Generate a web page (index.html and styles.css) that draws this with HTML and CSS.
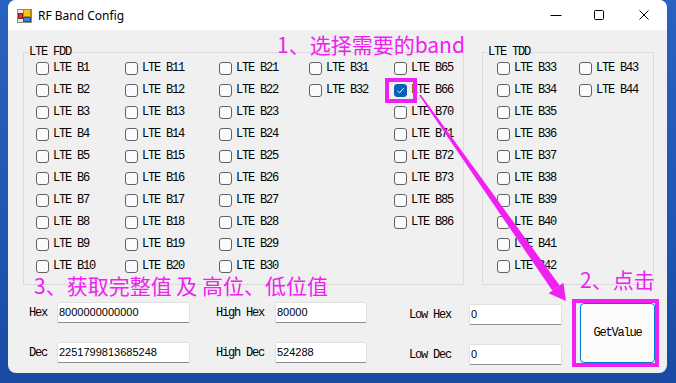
FILE: index.html
```html
<!DOCTYPE html>
<html>
<head>
<meta charset="utf-8">
<link rel="stylesheet" href="styles.css">
</head>
<body>
<div class="desktop">
  <div class="window">
    <div class="titlebar">
      <svg class="appicon" width="15" height="14" viewBox="0 0 15 14">
        <rect x="0.5" y="0.5" width="14" height="13" fill="#e8e8e8" stroke="#8a8a8a"/>
        <rect x="1.5" y="4.5" width="4" height="5" fill="#e03030" stroke="#902020"/>
        <rect x="6.5" y="0.5" width="7" height="7" fill="#f5c518" stroke="#b08a10"/>
        <rect x="6.5" y="8.5" width="7" height="4" fill="#3c7fe0" stroke="#2050a0"/>
      </svg>
      <span class="title">RF Band Config</span>
      <div class="controls">
        <span class="ctl c-min"><svg width="12" height="12" viewBox="0 0 12 12"><line x1="0.5" y1="6.5" x2="11.5" y2="6.5" stroke="#000" stroke-width="1"/></svg></span>
        <span class="ctl c-max"><svg width="12" height="12" viewBox="0 0 12 12"><rect x="1.5" y="1.5" width="9" height="9" rx="1" fill="none" stroke="#000" stroke-width="1"/></svg></span>
        <span class="ctl c-close"><svg width="12" height="12" viewBox="0 0 12 12"><path d="M1.5 1.5 L10.5 10.5 M10.5 1.5 L1.5 10.5" stroke="#000" stroke-width="1"/></svg></span>
      </div>
    </div>
    <div class="client">
      <div class="groups">
        <div class="group fdd">
          <span class="legend">LTE FDD</span>
          <div class="col w1">
            <div class="item"><span class="box"></span><span class="lab">LTE B1</span></div>
            <div class="item"><span class="box"></span><span class="lab">LTE B2</span></div>
            <div class="item"><span class="box"></span><span class="lab">LTE B3</span></div>
            <div class="item"><span class="box"></span><span class="lab">LTE B4</span></div>
            <div class="item"><span class="box"></span><span class="lab">LTE B5</span></div>
            <div class="item"><span class="box"></span><span class="lab">LTE B6</span></div>
            <div class="item"><span class="box"></span><span class="lab">LTE B7</span></div>
            <div class="item"><span class="box"></span><span class="lab">LTE B8</span></div>
            <div class="item"><span class="box"></span><span class="lab">LTE B9</span></div>
            <div class="item"><span class="box"></span><span class="lab">LTE B10</span></div>
          </div>
          <div class="col w2">
            <div class="item"><span class="box"></span><span class="lab">LTE B11</span></div>
            <div class="item"><span class="box"></span><span class="lab">LTE B12</span></div>
            <div class="item"><span class="box"></span><span class="lab">LTE B13</span></div>
            <div class="item"><span class="box"></span><span class="lab">LTE B14</span></div>
            <div class="item"><span class="box"></span><span class="lab">LTE B15</span></div>
            <div class="item"><span class="box"></span><span class="lab">LTE B16</span></div>
            <div class="item"><span class="box"></span><span class="lab">LTE B17</span></div>
            <div class="item"><span class="box"></span><span class="lab">LTE B18</span></div>
            <div class="item"><span class="box"></span><span class="lab">LTE B19</span></div>
            <div class="item"><span class="box"></span><span class="lab">LTE B20</span></div>
          </div>
          <div class="col w3">
            <div class="item"><span class="box"></span><span class="lab">LTE B21</span></div>
            <div class="item"><span class="box"></span><span class="lab">LTE B22</span></div>
            <div class="item"><span class="box"></span><span class="lab">LTE B23</span></div>
            <div class="item"><span class="box"></span><span class="lab">LTE B24</span></div>
            <div class="item"><span class="box"></span><span class="lab">LTE B25</span></div>
            <div class="item"><span class="box"></span><span class="lab">LTE B26</span></div>
            <div class="item"><span class="box"></span><span class="lab">LTE B27</span></div>
            <div class="item"><span class="box"></span><span class="lab">LTE B28</span></div>
            <div class="item"><span class="box"></span><span class="lab">LTE B29</span></div>
            <div class="item"><span class="box"></span><span class="lab">LTE B30</span></div>
          </div>
          <div class="col w4">
            <div class="item"><span class="box"></span><span class="lab">LTE B31</span></div>
            <div class="item"><span class="box"></span><span class="lab">LTE B32</span></div>
          </div>
          <div class="col">
            <div class="item"><span class="box"></span><span class="lab">LTE B65</span></div>
            <div class="item"><span class="box checked"><svg width="9" height="9" viewBox="0 0 9 9"><path d="M1.5 4.8 L3.6 6.8 L7.6 2.2" fill="none" stroke="#fff" stroke-width="1"/></svg></span><span class="lab">LTE B66</span></div>
            <div class="item"><span class="box"></span><span class="lab">LTE B70</span></div>
            <div class="item"><span class="box"></span><span class="lab">LTE B71</span></div>
            <div class="item"><span class="box"></span><span class="lab">LTE B72</span></div>
            <div class="item"><span class="box"></span><span class="lab">LTE B73</span></div>
            <div class="item"><span class="box"></span><span class="lab">LTE B85</span></div>
            <div class="item"><span class="box"></span><span class="lab">LTE B86</span></div>
          </div>
        </div>
        <div class="group tdd">
          <span class="legend">LTE TDD</span>
          <div class="col w5">
            <div class="item"><span class="box"></span><span class="lab">LTE B33</span></div>
            <div class="item"><span class="box"></span><span class="lab">LTE B34</span></div>
            <div class="item"><span class="box"></span><span class="lab">LTE B35</span></div>
            <div class="item"><span class="box"></span><span class="lab">LTE B36</span></div>
            <div class="item"><span class="box"></span><span class="lab">LTE B37</span></div>
            <div class="item"><span class="box"></span><span class="lab">LTE B38</span></div>
            <div class="item"><span class="box"></span><span class="lab">LTE B39</span></div>
            <div class="item"><span class="box"></span><span class="lab">LTE B40</span></div>
            <div class="item"><span class="box"></span><span class="lab">LTE B41</span></div>
            <div class="item"><span class="box"></span><span class="lab">LTE B42</span></div>
          </div>
          <div class="col">
            <div class="item"><span class="box"></span><span class="lab">LTE B43</span></div>
            <div class="item"><span class="box"></span><span class="lab">LTE B44</span></div>
          </div>
        </div>
      </div>
      <div class="bottom">
        <div class="fields">
          <span class="lab">Hex</span>
          <input class="field" type="text" value="8000000000000" readonly>
          <span class="lab mid">High Hex</span>
          <input class="field" type="text" value="80000" readonly>
          <span class="lab far">Low Hex</span>
          <input class="field low" type="text" value="0" readonly>
          <span class="lab">Dec</span>
          <input class="field" type="text" value="2251799813685248" readonly>
          <span class="lab mid">High Dec</span>
          <input class="field" type="text" value="524288" readonly>
          <span class="lab far">Low Dec</span>
          <input class="field low" type="text" value="0" readonly>
        </div>
        <button class="getvalue">GetValue</button>
      </div>
    </div>
  </div>

  <div class="ann ann1">1、选择需要的band</div>
  <div class="ann ann2">2、点击</div>
  <div class="ann ann3">3、获取完整值 及 高位、低位值</div>
  <svg class="overlay" width="676" height="383" viewBox="0 0 676 383">
    <rect x="387" y="80" width="28" height="21" fill="none" stroke="#f020f0" stroke-width="4"/>
    <rect x="574" y="301" width="83" height="64" fill="none" stroke="#f020f0" stroke-width="4"/>
    <polygon points="419,95 421,95 559.7,285.4 552.3,290.6" fill="#f020f0"/>
    <polygon points="563.4,282.8 548.6,293.2 566,301" fill="#f020f0"/>
  </svg>
</div>
</body>
</html>
```
FILE: styles.css
```css
* { box-sizing: border-box; }
html, body { margin: 0; padding: 0; }
body { width: 676px; height: 383px; overflow: hidden; }

.desktop {
  position: relative;
  width: 676px;
  height: 383px;
  background: linear-gradient(180deg, #2a62c2 0%, #1f55b4 60%, #1a4aa2 100%);
  padding-left: 8px;
}

.window {
  width: 659px;
  height: 373px;
  background: #f0f0f0;
  border-radius: 8px;
  overflow: hidden;
  display: flex;
  flex-direction: column;
}

.titlebar {
  height: 30px;
  flex: none;
  background: #ffffff;
  display: flex;
  align-items: center;
  padding-left: 9px;
}
.appicon { display: block; margin-top: 1px; }
.title {
  margin-left: 6px;
  font-family: "Noto Sans", "Open Sans", sans-serif;
  font-size: 12px;
  color: #000;
  margin-top: 1px;
}
.controls {
  margin-left: auto;
  display: flex;
  height: 30px;
}
.ctl {
  height: 30px;
  display: flex;
  align-items: center;
  justify-content: center;
}
.c-min { width: 40px; }
.c-max { width: 45px; }
.c-close { width: 46px; }
.ctl svg { display: block; }

.client {
  flex: 1;
  padding: 22px 0 0 15px;
}

.groups {
  display: flex;
  gap: 18px;
}

.group {
  position: relative;
  border: 1px solid #dcdcdc;
  display: flex;
  padding: 4px 0 7px 12px;
  height: 233px;
}
.fdd { width: 441px; }
.tdd { width: 172px; padding-left: 14px; }

.legend {
  position: absolute;
  top: -7px;
  left: 4px;
  padding: 0 1px;
  background: #f0f0f0;
  line-height: 12px;
}

.legend, .lab, .getvalue {
  font-family: "Liberation Mono", "DejaVu Sans Mono", monospace;
  font-size: 12px;
  letter-spacing: -1.2px;
  color: #000;
}

.col { display: flex; flex-direction: column; }
.w1 { width: 89px; }
.w2 { width: 94px; }
.w3 { width: 90px; }
.w4 { width: 85px; }
.w5 { width: 82px; }

.item {
  height: 22px;
  display: flex;
  align-items: center;
  gap: 4px;
}
.box {
  width: 13px;
  height: 13px;
  border: 1px solid #626262;
  border-radius: 3px;
  background: #fbfbfb;
  flex: none;
  display: flex;
  align-items: center;
  justify-content: center;
}
.box.checked {
  background: #0a5fb8;
  border-color: #0a5fb8;
}
.box svg { display: block; }
.lab { line-height: 12px; white-space: nowrap; }

.bottom {
  display: flex;
  margin-top: 17px;
  padding-left: 6px;
}

.fields {
  display: grid;
  grid-template-columns: 28px 133px 85px 92px 102px 93px;
  grid-template-rows: 21px 21px;
  row-gap: 19px;
  align-items: center;
}
.fields .mid { margin-left: 26px; }
.fields .far { margin-left: 42px; position: relative; top: 2px; }

.field {
  width: 100%;
  height: 21px;
  margin: 0;
  border: 1px solid #e1e1e1;
  border-bottom: 1px solid #8c8c8c;
  border-radius: 2px;
  background: #ffffff;
  padding: 0 0 2px 1px;
  font-family: "Liberation Sans", Arial, sans-serif;
  font-size: 11px;
  color: #000;
  outline: none;
}
.field.low { position: relative; top: 2px; }

.getvalue {
  width: 75px;
  height: 60px;
  margin: 1px 0 0 18px;
  border: 1px solid #0078d4;
  border-radius: 4px;
  background: #fbfbfb;
  padding: 0;
}

.ann {
  position: absolute;
  font-family: "Noto Sans CJK SC", "Noto Sans", sans-serif;
  font-size: 21px;
  line-height: 21px;
  color: #f020f0;
  white-space: nowrap;
}
.ann1 { left: 277px; top: 34px; }
.ann2 { left: 580px; top: 269px; }
.ann3 { left: 34px; top: 275px; }

.overlay {
  position: absolute;
  left: 0;
  top: 0;
  pointer-events: none;
}
```
